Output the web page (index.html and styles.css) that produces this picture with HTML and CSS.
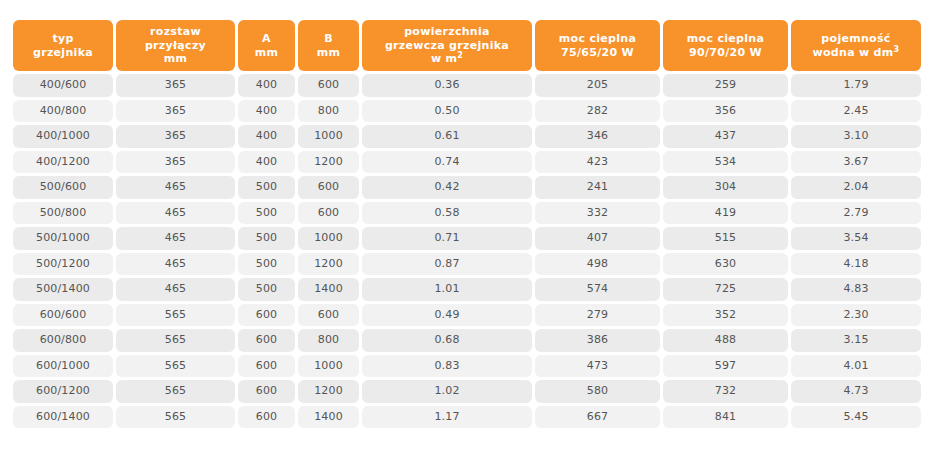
FILE: index.html
```html
<!DOCTYPE html>
<html lang="pl">
<head>
<meta charset="utf-8">
<link rel="stylesheet" href="styles.css">
</head>
<body>
<div class="wrap">
<table class="spec">
<colgroup>
<col class="c1"><col class="c2"><col class="c3"><col class="c4"><col class="c5"><col class="c6"><col class="c7"><col class="c8">
</colgroup>
<thead>
<tr>
<th>typ<br>grzejnika</th>
<th>rozstaw<br>przyłączy<br>mm</th>
<th>A<br>mm</th>
<th>B<br>mm</th>
<th>powierzchnia<br>grzewcza grzejnika<br>w m<sup>2</sup></th>
<th>moc cieplna<br>75/65/20 W</th>
<th>moc cieplna<br>90/70/20 W</th>
<th>pojemność<br>wodna w dm<sup>3</sup></th>
</tr>
</thead>
<tbody>
<tr><td>400/600</td><td>365</td><td>400</td><td>600</td><td>0.36</td><td>205</td><td>259</td><td>1.79</td></tr>
<tr><td>400/800</td><td>365</td><td>400</td><td>800</td><td>0.50</td><td>282</td><td>356</td><td>2.45</td></tr>
<tr><td>400/1000</td><td>365</td><td>400</td><td>1000</td><td>0.61</td><td>346</td><td>437</td><td>3.10</td></tr>
<tr><td>400/1200</td><td>365</td><td>400</td><td>1200</td><td>0.74</td><td>423</td><td>534</td><td>3.67</td></tr>
<tr><td>500/600</td><td>465</td><td>500</td><td>600</td><td>0.42</td><td>241</td><td>304</td><td>2.04</td></tr>
<tr><td>500/800</td><td>465</td><td>500</td><td>600</td><td>0.58</td><td>332</td><td>419</td><td>2.79</td></tr>
<tr><td>500/1000</td><td>465</td><td>500</td><td>1000</td><td>0.71</td><td>407</td><td>515</td><td>3.54</td></tr>
<tr><td>500/1200</td><td>465</td><td>500</td><td>1200</td><td>0.87</td><td>498</td><td>630</td><td>4.18</td></tr>
<tr><td>500/1400</td><td>465</td><td>500</td><td>1400</td><td>1.01</td><td>574</td><td>725</td><td>4.83</td></tr>
<tr><td>600/600</td><td>565</td><td>600</td><td>600</td><td>0.49</td><td>279</td><td>352</td><td>2.30</td></tr>
<tr><td>600/800</td><td>565</td><td>600</td><td>800</td><td>0.68</td><td>386</td><td>488</td><td>3.15</td></tr>
<tr><td>600/1000</td><td>565</td><td>600</td><td>1000</td><td>0.83</td><td>473</td><td>597</td><td>4.01</td></tr>
<tr><td>600/1200</td><td>565</td><td>600</td><td>1200</td><td>1.02</td><td>580</td><td>732</td><td>4.73</td></tr>
<tr><td>600/1400</td><td>565</td><td>600</td><td>1400</td><td>1.17</td><td>667</td><td>841</td><td>5.45</td></tr>
</tbody>
</table>
</div>
</body>
</html>
```
FILE: styles.css
```css
html, body {
  margin: 0;
  padding: 0;
  background: #ffffff;
}
.wrap {
  padding: 17px 0 0 10px;
}
.spec {
  table-layout: fixed;
  border-collapse: separate;
  border-spacing: 3px;
  width: 914px;
  font-family: "DejaVu Sans", Verdana, sans-serif;
  font-size: 11px;
}
.c1 { width: 100px; }
.c2 { width: 119px; }
.c3 { width: 57px; }
.c4 { width: 61px; }
.c5 { width: 170px; }
.c6 { width: 125px; }
.c7 { width: 125px; }
.c8 { width: 130px; }
.spec th {
  background: #f8922b;
  color: #ffffff;
  font-weight: bold;
  letter-spacing: 0.3px;
  line-height: 13.4px;
  height: 51px;
  padding: 0 4px;
  box-sizing: border-box;
  border-radius: 6px;
  text-align: center;
  vertical-align: middle;
}
.spec th sup {
  font-size: 8px;
  line-height: 0;
  vertical-align: 4px;
}
.spec td {
  color: #555555;
  letter-spacing: 0.15px;
  text-align: center;
  line-height: 16.5px;
  padding: 3px 4px;
  border-radius: 6px;
  background: #ebebeb;
}
.spec tbody tr:nth-child(even) td {
  background: #f2f2f2;
}
```
